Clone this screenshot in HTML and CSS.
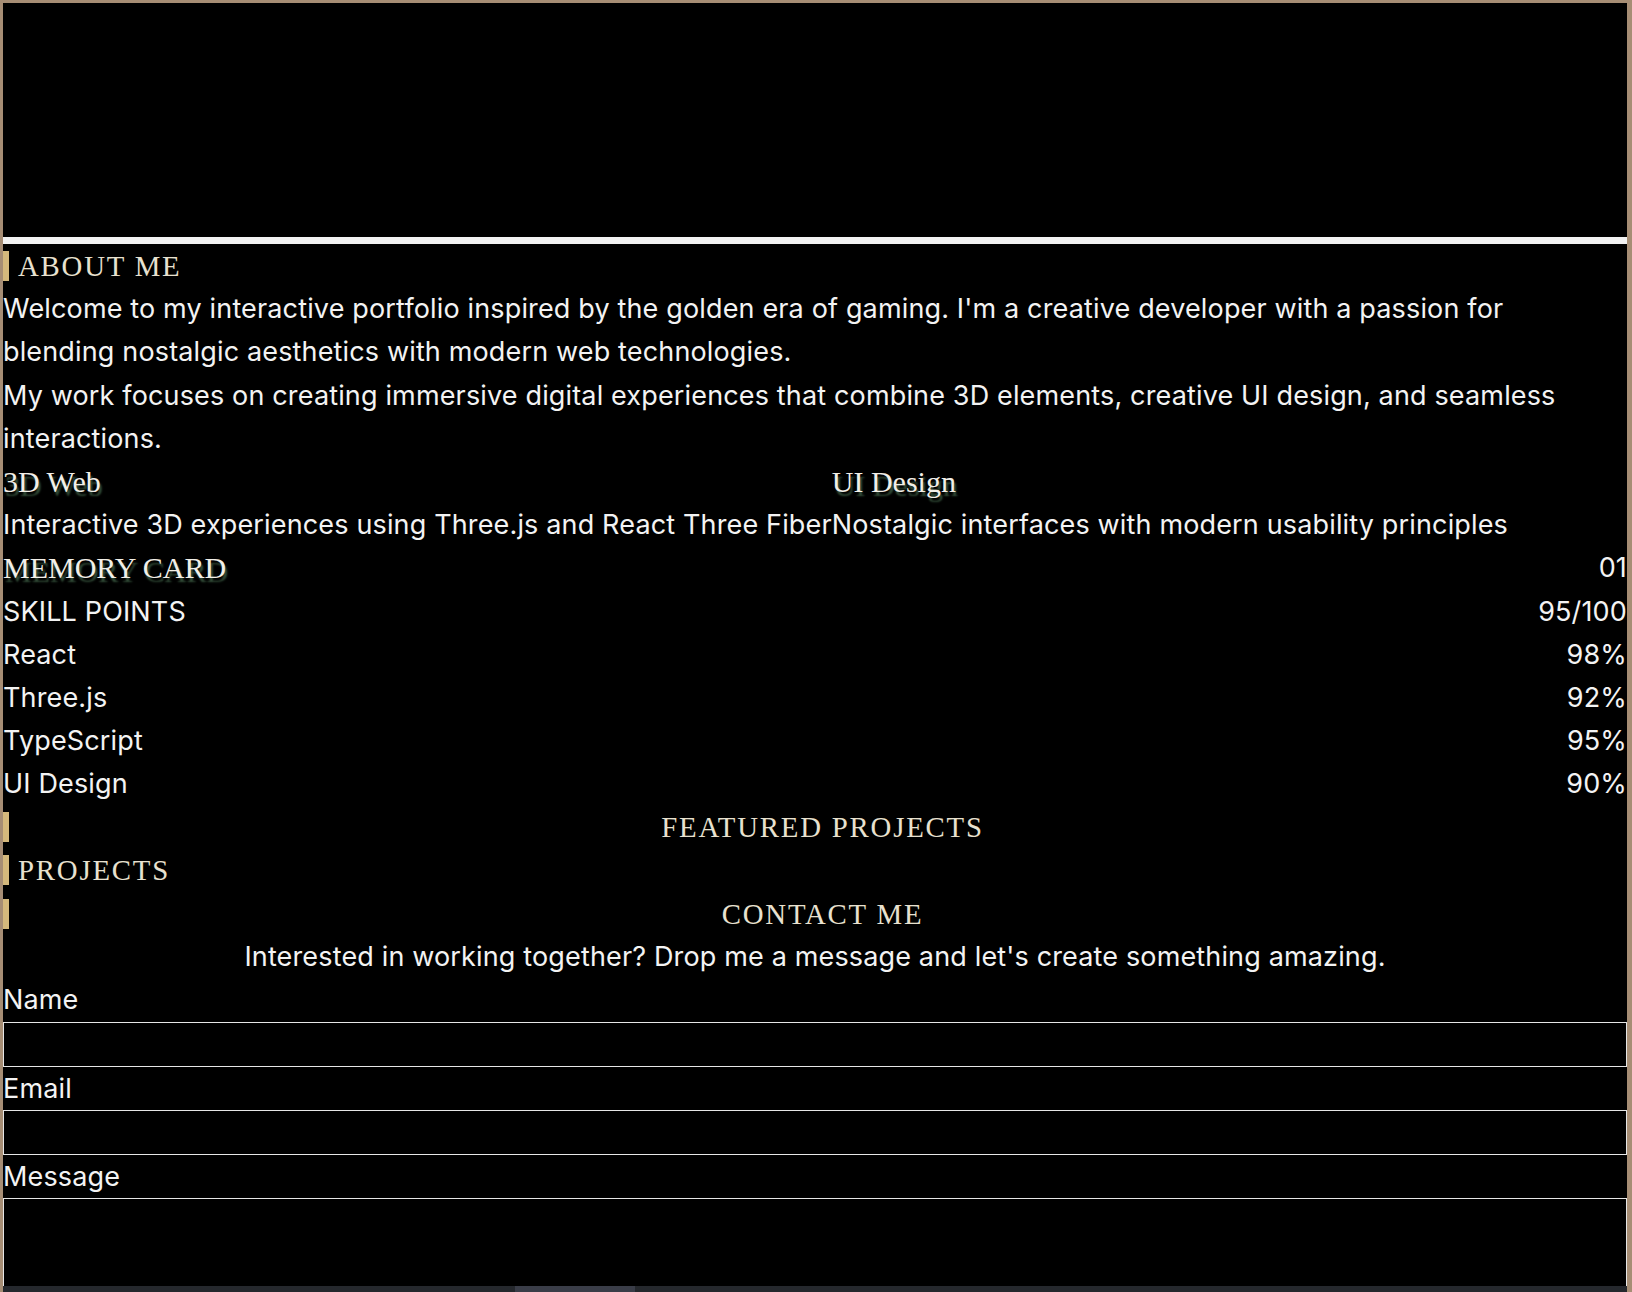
FILE: index.html
```html
<!DOCTYPE html>
<html lang="en">
<head>
<meta charset="utf-8">
<title>Portfolio</title>
<link rel="stylesheet" href="styles.css">
</head>
<body>
<div class="hero"></div>
<div class="divider"></div>
<section class="section about">
  <h2 class="section-title">ABOUT ME</h2>
  <p class="about-text">Welcome to my interactive portfolio inspired by the golden era of gaming. I'm a creative developer with a passion for blending nostalgic aesthetics with modern web technologies.</p>
  <p class="about-text">My work focuses on creating immersive digital experiences that combine 3D elements, creative UI design, and seamless interactions.</p>
  <div class="cards">
    <div class="card">
      <h3 class="card-title">3D Web</h3>
      <p class="card-desc">Interactive 3D experiences using Three.js and React Three Fiber</p>
    </div>
    <div class="card">
      <h3 class="card-title">UI Design</h3>
      <p class="card-desc">Nostalgic interfaces with modern usability principles</p>
    </div>
  </div>
  <div class="stat-row">
    <h3 class="card-title">MEMORY CARD</h3>
    <span>01</span>
  </div>
  <div class="stat-row"><span>SKILL POINTS</span><span>95/100</span></div>
  <div class="stat-row"><span>React</span><span>98%</span></div>
  <div class="stat-row"><span>Three.js</span><span>92%</span></div>
  <div class="stat-row"><span>TypeScript</span><span>95%</span></div>
  <div class="stat-row"><span>UI Design</span><span>90%</span></div>
</section>
<section class="section">
  <h2 class="section-title centered">FEATURED PROJECTS</h2>
</section>
<section class="section">
  <h2 class="section-title">PROJECTS</h2>
</section>
<section class="section contact">
  <h2 class="section-title centered">CONTACT ME</h2>
  <p class="intro">Interested in working together? Drop me a message and let's create something amazing.</p>
  <form class="contact-form">
    <label class="field-label" for="name">Name</label>
    <input class="field" id="name" type="text">
    <label class="field-label" for="email">Email</label>
    <input class="field" id="email" type="email">
    <label class="field-label" for="message">Message</label>
    <textarea class="field area" id="message"></textarea>
  </form>
</section>
<div class="hscroll"><div class="hscroll-thumb"></div></div>
</body>
</html>
```
FILE: styles.css
```css
html {
  background: #a68d74;
  overflow: hidden;
  height: 100%;
}
body {
  margin: 3px 5px 0 3px;
  background: #000;
  color: #f3f3f3;
  font-family: Inter, "Liberation Sans", sans-serif;
  font-size: 27px;
  letter-spacing: 0.15px;
  line-height: 43.2px;
  min-height: 1400px;
}
h2, h3, p { margin: 0; font-weight: normal; }
.hero { height: 234px; background: #000; }
.divider { height: 7px; background: #f2f2f2; }

.section { display: flow-root; }

.section-title {
  font-family: "Liberation Serif", "DejaVu Serif", serif;
  font-size: 28.8px;
  line-height: 30px;
  letter-spacing: 1.8px;
  color: #e8e1cf;
  border-left: 6px solid #d4b87c;
  padding-left: 9px;
  margin: 6.6px 0;
}
.section-title.centered { text-align: center; }

.about-text { max-width: 1575px; }

.cards { display: flex; }
.card { flex: none; }
.card-desc { white-space: nowrap; }
.card-title {
  font-family: "Liberation Serif", "DejaVu Serif", serif;
  font-size: 30px;
  letter-spacing: 0;
  line-height: 43.2px;
  color: #f2efe8;
  text-shadow: 2px 4px 2px #34503a;
}
.stat-row {
  display: flex;
  justify-content: space-between;
}
.intro { text-align: center; }

.contact-form { display: flex; flex-direction: column; }
.field-label { display: block; }
.field {
  display: block;
  box-sizing: border-box;
  width: 100%;
  height: 45.2px;
  margin: 0;
  padding: 0;
  background: #000;
  color: #f3f3f3;
  border: 1px solid #e6e6e6;
  font-family: inherit;
  font-size: 27px;
  line-height: 43.2px;
}
.field.area { height: 220px; resize: none; }

.hscroll {
  position: fixed;
  left: 3px;
  right: 5px;
  bottom: 0;
  height: 6px;
  background: #25282d;
}
.hscroll-thumb {
  position: absolute;
  left: 512px;
  width: 120px;
  top: 0;
  bottom: 0;
  background: #3a3d48;
}
```
